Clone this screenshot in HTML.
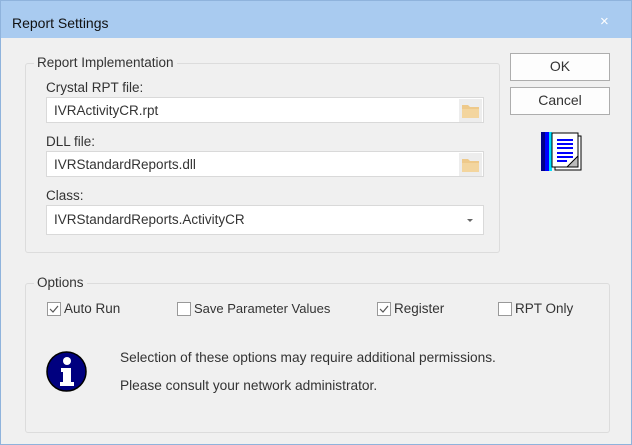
<!DOCTYPE html>
<html><head><style>
*{box-sizing:border-box;margin:0;padding:0}
body{width:632px;height:445px;background:#f0f0f0;font-family:"Liberation Sans",sans-serif;font-size:13px;color:#222;position:relative;overflow:hidden}
.win{position:absolute;left:0;top:0;width:632px;height:445px;border:1px solid #8fb3dc;background:#f0f0f0}
.title{position:absolute;left:0;top:0;width:630px;height:37px;background:#a9cbf0}
.title span{position:absolute;left:11px;top:14px;font-size:14px;color:#111}
.title b{position:absolute;left:599px;top:12px;font-weight:normal;font-size:15px;color:#fff}
.grp{position:absolute;border:1px solid #dcdcdc;border-radius:3px}
.lbl{position:absolute;background:#f0f0f0;padding:0 3px;color:#333}
.t{position:absolute;color:#333}
.inp{position:absolute;background:#fff;border:1px solid #d9d9d9;padding:5px 7px;color:#333}
.fold{position:absolute;right:1px;top:1px;width:23px;height:23px;background:#ededed}
.btn{position:absolute;background:#fdfdfd;border:1px solid #adadad;text-align:center;line-height:25px;font-size:14px;color:#333}
.cb{position:absolute;width:14px;height:14px;border:1px solid #999;background:#fff}
</style></head><body><div class="win">
<div class="title"><span>Report Settings</span><b>×</b></div>
<div class="grp" style="left:24px;top:62px;width:475px;height:190px"></div>
<div class="lbl" style="left:33px;top:54px;font-size:13.5px">Report Implementation</div>
<div class="t" style="left:45px;top:79px;font-size:13.5px">Crystal RPT file:</div>
<div class="inp" style="left:45px;top:96px;width:438px;height:26px;font-size:13.5px">IVRActivityCR.rpt<div class="fold"><svg width="23" height="23"><path d="M3 6h6l2 2h9v11H3z" fill="#eec98a"/><path d="M3 10h17v9H3z" fill="#f3d59e"/></svg></div></div>
<div class="t" style="left:45px;top:133px;font-size:13.5px">DLL file:</div>
<div class="inp" style="left:45px;top:150px;width:438px;height:26px;font-size:13.5px">IVRStandardReports.dll<div class="fold"><svg width="23" height="23"><path d="M3 6h6l2 2h9v11H3z" fill="#eec98a"/><path d="M3 10h17v9H3z" fill="#f3d59e"/></svg></div></div>
<div class="t" style="left:45px;top:187px;font-size:13.5px">Class:</div>
<div class="inp" style="left:45px;top:204px;width:438px;height:30px;padding-top:6px;font-size:13.5px">IVRStandardReports.ActivityCR<svg style="position:absolute;right:10px;top:13px" width="6" height="4"><path d="M0 0h6L3 3z" fill="#666"/></svg></div>
<div class="btn" style="left:509px;top:52px;width:100px;height:28px">OK</div>
<div class="btn" style="left:509px;top:86px;width:100px;height:28px">Cancel</div>
<svg style="position:absolute;left:540px;top:131px" width="43" height="40">
<rect x="0" y="0" width="8" height="39" fill="#00008b"/><rect x="4" y="0" width="4" height="39" fill="#0000ff"/><rect x="8" y="0" width="3" height="39" fill="#00e0ff"/>
<rect x="14" y="4" width="26" height="34" fill="#fff" stroke="#000"/><rect x="11" y="1" width="26" height="34" fill="#fff" stroke="#000"/>
<path d="M16 8h16M16 12h16M16 16h16M16 21h16M16 25h16M16 29h10" stroke="#00f" stroke-width="2"/>
<path d="M26 35l11-11v11z" fill="#bbb" stroke="#000"/></svg>
<div class="grp" style="left:24px;top:282px;width:585px;height:150px"></div>
<div class="lbl" style="left:33px;top:274px;font-size:13.5px">Options</div>
<div class="cb" style="left:46px;top:301px"><svg width="12" height="12"><path d="M2 6l3 3 5-6" fill="none" stroke="#555" stroke-width="1.2"/></svg></div>
<div class="t" style="left:63px;top:300px;font-size:13.5px">Auto Run</div>
<div class="cb" style="left:176px;top:301px"></div>
<div class="t" style="left:193px;top:300px;font-size:13px">Save Parameter Values</div>
<div class="cb" style="left:376px;top:301px"><svg width="12" height="12"><path d="M2 6l3 3 5-6" fill="none" stroke="#555" stroke-width="1.2"/></svg></div>
<div class="t" style="left:393px;top:300px;font-size:13.5px">Register</div>
<div class="cb" style="left:497px;top:301px"></div>
<div class="t" style="left:514px;top:300px;font-size:13.5px">RPT Only</div>
<svg style="position:absolute;left:45px;top:350px" width="41" height="41"><circle cx="20.5" cy="20.5" r="19.5" fill="#00007f" stroke="#000" stroke-width="1.5"/><circle cx="21" cy="10" r="4" fill="#fff"/><path d="M15 17h10v14h3v4H14v-4h3v-10h-2z" fill="#fff"/></svg>
<div class="t" style="left:119px;top:349px;font-size:13.7px">Selection of these options may require additional permissions.</div>
<div class="t" style="left:119px;top:377px;font-size:13.7px">Please consult your network administrator.</div>
</div></body></html>
